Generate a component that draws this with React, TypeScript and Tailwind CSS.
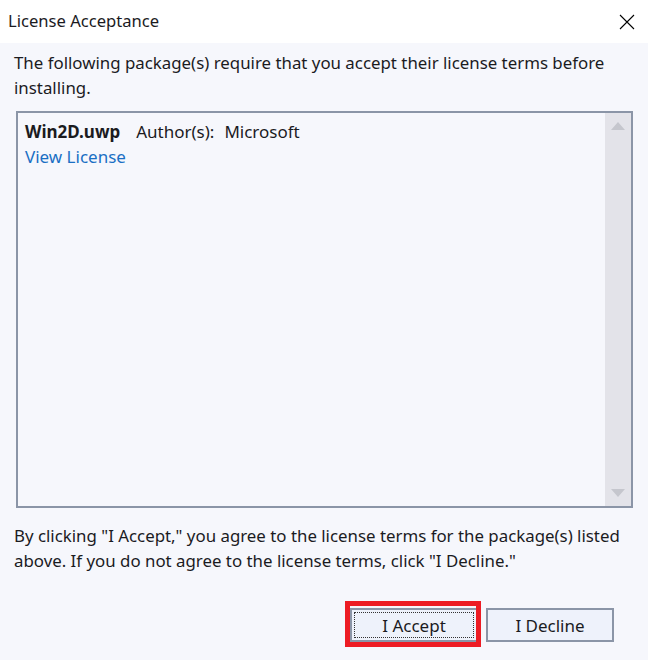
export default function App() {
  return (
    <div className="relative flex h-[660px] w-[648px] flex-col bg-[#f6f7fc] font-['Noto_Sans',sans-serif] text-[#1b1b1f]">
      {/* title bar */}
      <div className="flex h-[43px] items-center justify-between bg-white pl-[8px] pr-[13px]">
        <span className="text-[16.6px]">License Acceptance</span>
        <svg width="16" height="16" viewBox="0 0 16 16" className="text-black">
          <path d="M1 1 L15 15 M15 1 L1 15" stroke="currentColor" strokeWidth="1.1" fill="none" />
        </svg>
      </div>

      <p className="mt-[7px] px-[14px] text-[16.85px] leading-[25px]">
        The following package(s) require that you accept their license terms before installing.
      </p>

      <div className="mx-[16px] mt-[11px] flex h-[397px] w-[617px] border-2 border-[#8b95a7]">
        <div className="flex-1 pl-[7px] pt-[6px] text-[17px] leading-[25px]">
          <div className="flex">
            <span className="font-bold">Win2D.uwp</span>
            <span className="ml-[16px]">Author(s):</span>
            <span className="ml-[10px]">Microsoft</span>
          </div>
          <a className="text-[#1a6fc4]">View License</a>
        </div>
        <div className="flex w-[26px] flex-col items-center justify-between bg-[#e3e3e9] py-[9px]">
          <svg width="14" height="8" viewBox="0 0 14 8">
            <path d="M7 0 L14 8 L0 8 Z" fill="#c5c6cd" />
          </svg>
          <svg width="14" height="8" viewBox="0 0 14 8">
            <path d="M0 0 L14 0 L7 8 Z" fill="#c5c6cd" />
          </svg>
        </div>
      </div>

      <p className="mt-[15px] px-[14px] text-[16.85px] leading-[25px]">
        By clicking "I Accept," you agree to the license terms for the package(s) listed above. If you do not agree to the license terms, click "I Decline."
      </p>

      <div className="mt-[35px] flex justify-end gap-[8px] pr-[34px]">
        <button className="flex h-[34px] w-[128px] items-center justify-center border-2 border-[#8b95a7] bg-[#eef2fb] p-[2px] text-[17px]">
          <span className="flex h-full w-full items-center justify-center border border-dotted border-[#333] pt-[2px]">I Accept</span>
        </button>
        <button className="flex h-[34px] w-[128px] items-center justify-center border-2 border-[#8b95a7] bg-[#eef2fb] pt-[2px] text-[17px]">
          I Decline
        </button>
      </div>

      {/* highlight annotation */}
      <div className="pointer-events-none absolute left-[345px] top-[601px] h-[46px] w-[136px] border-[5px] border-[#ed1c24]" />
    </div>
  );
}
